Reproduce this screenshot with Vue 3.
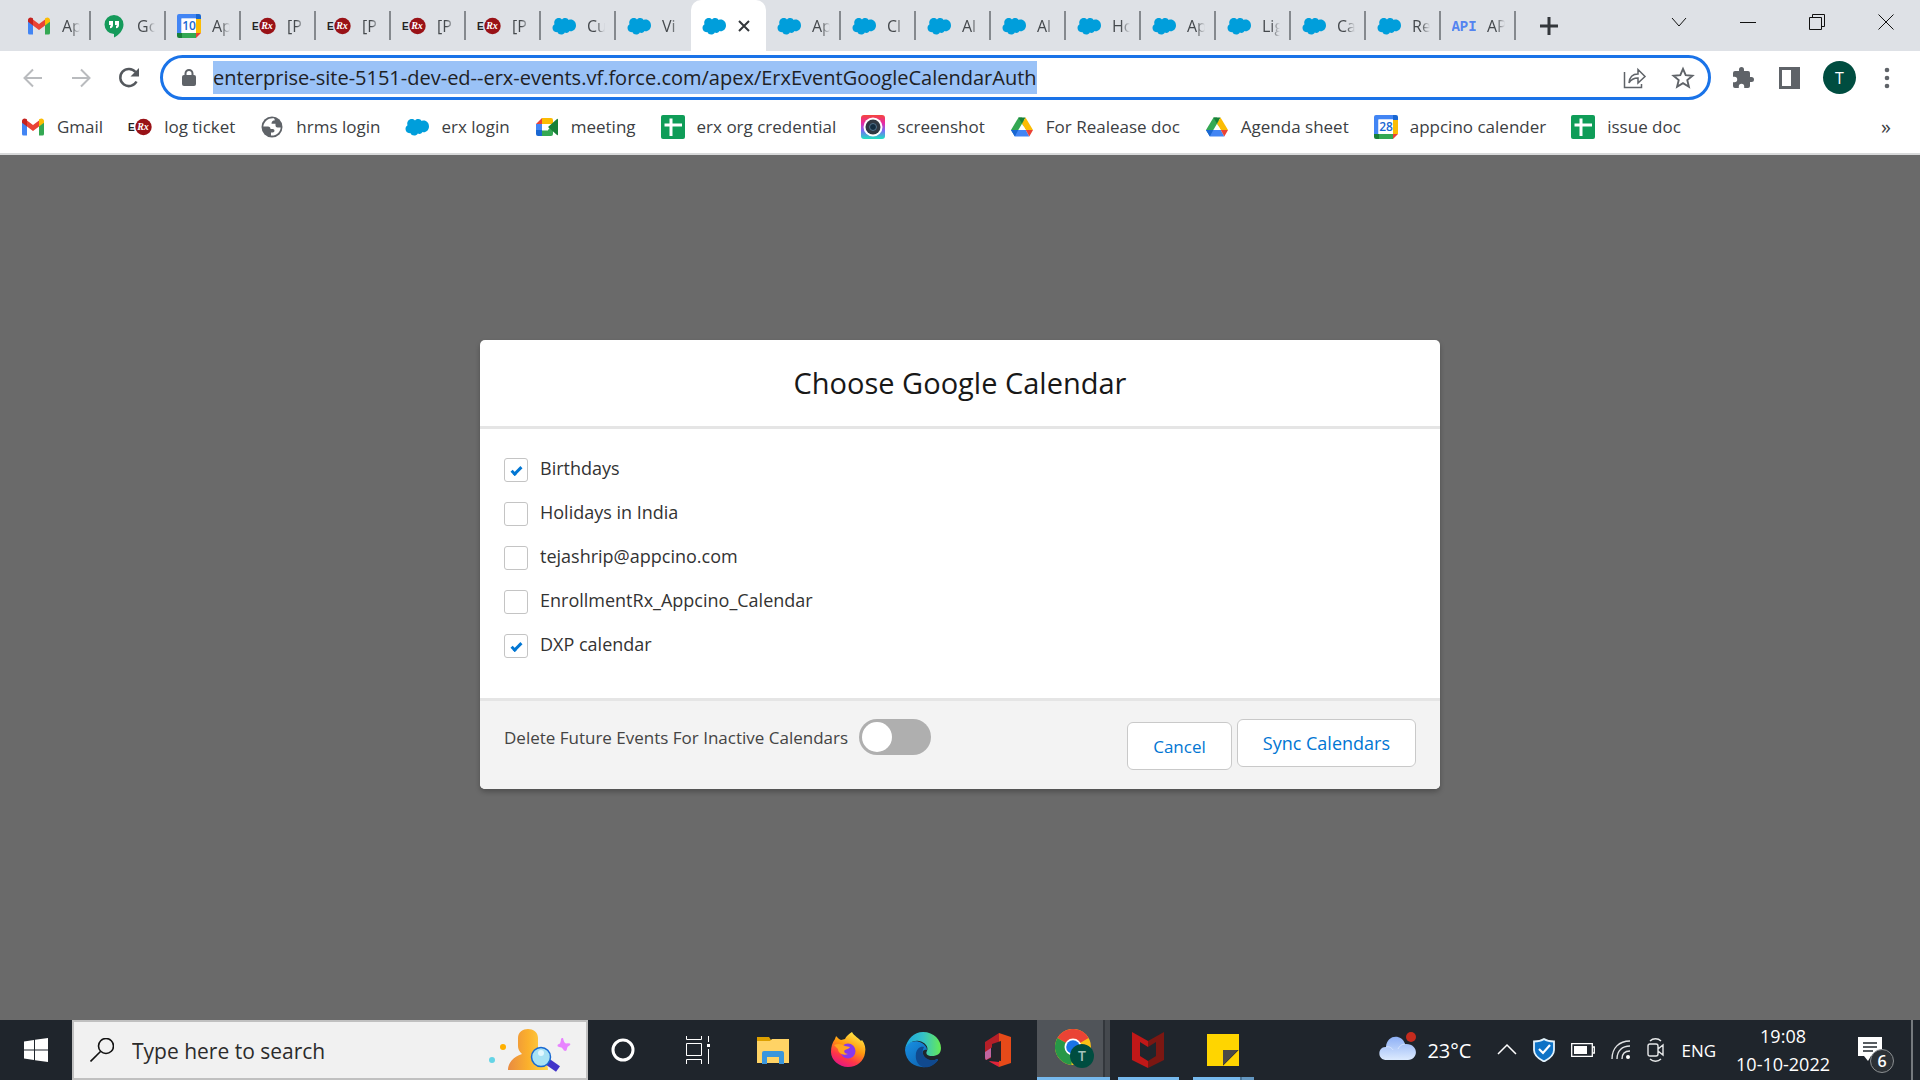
<script setup>
  import { reactive, ref } from 'vue'

  // every open tab; the title is cut off by the narrow tab
  const tabs = [
    { icon: 'gmail', title: 'Ap' },
    { icon: 'hangouts', title: 'Go' },
    { icon: 'cal', day: '10', title: 'Ap' },
    { icon: 'erx', title: '[P' },
    { icon: 'erx', title: '[P' },
    { icon: 'erx', title: '[P' },
    { icon: 'erx', title: '[P' },
    { icon: 'cloud', title: 'Cu' },
    { icon: 'cloud', title: 'Vi' },
    { icon: 'cloud', title: '', active: true },
    { icon: 'cloud', title: 'Ap' },
    { icon: 'cloud', title: 'Cl' },
    { icon: 'cloud', title: 'Al' },
    { icon: 'cloud', title: 'Al' },
    { icon: 'cloud', title: 'Ho' },
    { icon: 'cloud', title: 'Ap' },
    { icon: 'cloud', title: 'Lig' },
    { icon: 'cloud', title: 'Ca' },
    { icon: 'cloud', title: 'Re' },
    { icon: 'api', title: 'AP' },
  ]

  const bookmarks = [
    { icon: 'gmail', title: 'Gmail' },
    { icon: 'erx', title: 'log ticket' },
    { icon: 'globe', title: 'hrms login' },
    { icon: 'cloud', title: 'erx login' },
    { icon: 'meet', title: 'meeting' },
    { icon: 'sheet', title: 'erx org credential' },
    { icon: 'camera', title: 'screenshot' },
    { icon: 'drive', title: 'For Realease doc' },
    { icon: 'drive', title: 'Agenda sheet' },
    { icon: 'cal', day: '28', title: 'appcino calender' },
    { icon: 'sheet', title: 'issue doc' },
  ]

  const calendars = reactive([
    { name: 'Birthdays', checked: true },
    { name: 'Holidays in India', checked: false },
    { name: 'tejashrip@appcino.com', checked: false },
    { name: 'EnrollmentRx_Appcino_Calendar', checked: false },
    { name: 'DXP calendar', checked: true },
  ])

  const url = ref('enterprise-site-5151-dev-ed--erx-events.vf.force.com/apex/ErxEventGoogleCalendarAuth')
  const deleteFuture = ref(false)
  const search = ref('')
</script>

<template>
  <!-- shared site icons -->
  <svg class="defs" width="0" height="0" aria-hidden="true">
    <defs>
      <symbol id="i-gmail" viewBox="0 0 24 24">
        <path fill="#4285f4" d="M1 7v12q0 1.500 1.500 1.500H6V10z" />
        <path fill="#34a853" d="M18 10v10.500h3.500q1.500 0 1.500-1.500V7z" />
        <path fill="#ea4335" d="M6 5.500l6 4.500 6-4.500v6l-6 4.500-6-4.500z" />
        <path fill="#c5221f" d="M1 6c0-2.500 2.700-3.300 4.400-2L6 4.500v7L1 7.800z" />
        <path fill="#fbbc04" d="M23 6c0-2.500-2.700-3.300-4.400-2l-.6.5v7l5-3.700z" />
      </symbol>
      <symbol id="i-hangouts" viewBox="0 0 24 24">
        <path fill="#159a5b" d="M12 1a9.500 9.500 0 0 0 0 19v3.500c5-2.500 9.500-7.500 9.500-13A9.500 9.500 0 0 0 12 1z" />
        <path fill="#fff" d="M7 7h4v4c0 2-1 3-3 3.200v-2L9 11H7zM13 7h4v4c0 2-1 3-3 3.200v-2l1-1.200h-2z" />
      </symbol>
      <symbol id="i-cal" viewBox="0 0 24 24">
        <path fill="#4285f4" d="M2 0h17v4.500H4.500V19H0V2q0-2 2-2z" />
        <path fill="#1967d2" d="M19 0h3q2 0 2 2v3h-5z" />
        <path fill="#fbbc04" d="M19 5h5v14h-5z" />
        <path fill="#34a853" d="M5 19h14v5H5z" />
        <path fill="#188038" d="M0 19h5v5H2q-2 0-2-2z" />
        <path fill="#ea4335" d="M19 19h5l-5 5z" />
        <path fill="#fff" d="M4.500 4.500H19V19H4.500z" />
      </symbol>
      <symbol id="i-erx" viewBox="0 0 24 24">
        <circle cx="15.500" cy="12" r="8.200" fill="#991217" />
      </symbol>
      <symbol id="i-cloud" viewBox="0 0 24 24">
        <path fill="#009edb" d="M10 5.500c1-1.200 2.300-1.600 3.500-1.500 1.300.1 2.500.8 3.200 2C20.500 4.500 24 7.500 24 11.500c0 4-3.500 6.500-6.500 5.600-1 1.700-3 2.300-4.700 1.500-1.500 2.800-6.300 2.700-7.500-.5C2.500 18.500.5 16.500.5 14c0-1.800.8-3 2-3.800C1 5.500 6.500 2 10 5.500z" />
      </symbol>
      <symbol id="i-api" viewBox="0 0 24 24"></symbol>
      <symbol id="i-globe" viewBox="0 0 24 24">
        <circle cx="12" cy="12" r="10.500" fill="#5f6368" />
        <path fill="#fff" d="M14 3.300C9 2.500 4 6 3.300 11.500H8q2.500 0 2.500 2.500h2.300q1.700 0 1.700 1.800 0 1.700-1.700 1.700H11v3c5 .5 9.500-3.300 9.700-8h-3.200q-2 0-2-2v-1.700h-4q0-3.500 3.500-3.500z" />
      </symbol>
      <symbol id="i-meet" viewBox="0 0 24 24">
        <path fill="#ea4335" d="M7 3v6H1z" />
        <path fill="#fbbc04" d="M7 3h9q2 0 2 2v4h-5V9H7z" />
        <path fill="#4285f4" d="M1 9h6v6.500H1z" />
        <path fill="#1967d2" d="M1 15h6v6H3q-2 0-2-2z" />
        <path fill="#34a853" d="M7 15h6l5-6v10q0 2-2 2H7z" />
        <path fill="#188038" d="M13 12l9-8q1-.6 1 .8v14.400q0 1.400-1 .8z" />
        <path fill="#fff" d="M7 9h6v6.500H7z" />
      </symbol>
      <symbol id="i-sheet" viewBox="0 0 24 24">
        <rect width="24" height="24" rx="2" fill="#0f9d58" />
        <path fill="#fff" d="M8.500 3.500h3v5H21v3h-9.500V21h-3v-9.500H3.500v-3h5z" />
      </symbol>
      <symbol id="i-camera" viewBox="0 0 24 24">
        <linearGradient id="g-cam" x1="0" y1="0" x2="0" y2="1">
          <stop offset="0" stop-color="#f5463c" /><stop offset=".35" stop-color="#e628a8" />
          <stop offset=".65" stop-color="#7a6cf5" /><stop offset="1" stop-color="#1ce5c0" />
        </linearGradient>
        <rect width="24" height="24" rx="3" fill="url(#g-cam)" />
        <circle cx="12" cy="12" r="9.500" fill="#fff" />
        <circle cx="12" cy="12" r="7.500" fill="#303842" />
        <circle cx="12" cy="12" r="3.500" fill="#122c40" stroke="#53738c" />
      </symbol>
      <symbol id="i-drive" viewBox="0 0 24 24">
        <path fill="#34a853" d="M8.500 2.500H12L15.500 9 5 21 1 15z" />
        <path fill="#188038" d="M8.500 2.500h7L12 8.700z" />
        <path fill="#fbbc04" d="M15.500 2.500L23 15h-7.200L12 8.700z" />
        <path fill="#4285f4" d="M8.300 15h7.500l3.500 6.500H5L1 15z" />
        <path fill="#1967d2" d="M1 15h7.300L4.800 21.500z" />
        <path fill="#ea4335" d="M15.800 15H23l-3.700 6.500z" />
        <path fill="#fff" d="M12 8.700l3.800 6.300H8.300z" />
      </symbol>
    </defs>
  </svg>

  <div class="screen">
    <header class="browser">
      <div class="tab-strip">
        <div v-for="(tab, index) in tabs" :key="index" class="tab" :class="{ active: tab.active, before: tabs[index + 1] && tabs[index + 1].active }">
          <svg class="site-icon" viewBox="0 0 24 24">
            <use :href="`#i-${tab.icon}`" />
            <text v-if="tab.icon === 'cal'" class="cal-day" x="12" y="16">{{ tab.day }}</text>
            <text v-if="tab.icon === 'api'" class="api-text" x="12" y="17">API</text>
            <template v-if="tab.icon === 'erx'">
              <text class="erx-e" x="0" y="16">E</text>
              <text class="erx-r" x="15" y="15">Rx</text>
            </template>
          </svg>
          <span v-if="!tab.active" class="tab-title">{{ tab.title }}</span>
          <button v-else class="plain tab-close" aria-label="Close tab">
            <svg width="14" height="14" viewBox="0 0 14 14"><path d="M2 2l10 10M12 2L2 12" stroke="#33373b" stroke-width="2" /></svg>
          </button>
        </div>
        <button class="plain new-tab" aria-label="New tab">
          <svg width="20" height="20" viewBox="0 0 20 20"><path d="M10 1v18M1 10h18" stroke="#33373b" stroke-width="3" /></svg>
        </button>
        <div class="window-buttons">
          <button class="plain" aria-label="Search tabs">
            <svg width="16" height="16" viewBox="0 0 16 16"><path d="M1 4l7 8 7-8" /></svg>
          </button>
          <button class="plain" aria-label="Minimize">
            <svg width="16" height="16" viewBox="0 0 16 16"><path d="M0 8.500h16" /></svg>
          </button>
          <button class="plain" aria-label="Restore">
            <svg width="16" height="16" viewBox="0 0 16 16"><path d="M.5 3.500h12v12H.5zM3.500 3V.5h12v12H13" /></svg>
          </button>
          <button class="plain" aria-label="Close">
            <svg width="16" height="16" viewBox="0 0 16 16"><path d="M.5.5l15 15M15.500.5l-15 15" /></svg>
          </button>
        </div>
      </div>

      <div class="toolbar">
        <button class="plain nav" aria-label="Back">
          <svg width="20" height="20" viewBox="0 0 20 20"><path d="M19 10H2M10 1.500L1.500 10l8.500 8.500" stroke="#b9bbbe" stroke-width="2" /></svg>
        </button>
        <button class="plain nav" aria-label="Forward">
          <svg width="20" height="20" viewBox="0 0 20 20"><path d="M1 10h17M10 1.500l8.500 8.500-8.500 8.500" stroke="#b9bbbe" stroke-width="2" /></svg>
        </button>
        <button class="plain nav" aria-label="Reload">
          <svg width="22" height="22" viewBox="0 0 22 22">
            <path d="M18.500 14.500A8.600 8.600 0 1 1 17.500 5" stroke="#54585d" stroke-width="2.500" />
            <path d="M21 1v8.500h-8.500z" fill="#54585d" />
          </svg>
        </button>
        <div class="omnibox">
          <svg class="lock" width="14" height="18" viewBox="0 0 14 18">
            <rect y="6" width="14" height="11" rx="2" fill="#5f6368" />
            <path d="M3.500 7V4.500a3.500 3.500 0 0 1 7 0V7" stroke="#5f6368" stroke-width="2" />
          </svg>
          <div class="url-area">
            <span class="url-selection" aria-hidden="true">{{ url }}</span>
            <input v-model="url" class="url" aria-label="Address" spellcheck="false">
          </div>
          <button class="plain" aria-label="Share">
            <svg width="24" height="24" viewBox="0 0 24 24">
              <path d="M1.500 6v15.500h17V18M6 17c.5-6 4-9 9-9V3.500l7 7-7 6.500v-5c-4 0-7 1.500-9 5z" stroke="#5f6368" stroke-width="1.500" />
            </svg>
          </button>
          <button class="plain" aria-label="Bookmark">
            <svg width="24" height="24" viewBox="0 0 24 24">
              <path d="M12 2.800l2.700 6.300 6.800.6-5.200 4.400 1.600 6.700-5.900-3.600-5.900 3.600 1.600-6.700-5.200-4.400 6.800-.6z" stroke="#5f6368" stroke-width="1.900" />
            </svg>
          </button>
        </div>
        <div class="tools">
          <button class="plain" aria-label="Extensions">
            <svg width="24" height="24" viewBox="0 0 24 24">
              <path fill="#5f6368" d="M20.500 11H19V7q0-2-2-2h-4V3.500a2.500 2.500 0 0 0-5 0V5H4Q2 5 2 7v3.800h1.500a2.700 2.700 0 0 1 0 5.400H2V20q0 2 2 2h3.800v-1.500a2.700 2.700 0 0 1 5.400 0V22H17q2 0 2-2v-4h1.500a2.500 2.500 0 0 0 0-5z" />
            </svg>
          </button>
          <button class="plain" aria-label="Side panel">
            <svg width="24" height="24" viewBox="0 0 24 24">
              <path fill="#5f6368" fill-rule="evenodd" d="M2 1h21v22H2zM5 4v16h9V4z" />
            </svg>
          </button>
          <button class="plain avatar" aria-label="Profile">T</button>
          <button class="plain" aria-label="Menu">
            <svg width="6" height="24" viewBox="0 0 6 24">
              <g fill="#5f6368"><circle cx="3" cy="4" r="2.300" /><circle cx="3" cy="12" r="2.300" /><circle cx="3" cy="20" r="2.300" /></g>
            </svg>
          </button>
        </div>
      </div>

      <nav class="bookmarks">
        <a v-for="mark in bookmarks" :key="mark.title" href="#" class="bookmark">
          <svg class="site-icon" viewBox="0 0 24 24">
            <use :href="`#i-${mark.icon}`" />
            <text v-if="mark.icon === 'cal'" class="cal-day" x="12" y="16">{{ mark.day }}</text>
            <template v-if="mark.icon === 'erx'">
              <text class="erx-e" x="0" y="16">E</text>
              <text class="erx-r" x="15" y="15">Rx</text>
            </template>
          </svg>
          <span>{{ mark.title }}</span>
        </a>
        <button class="plain more" aria-label="More bookmarks">»</button>
      </nav>
    </header>

    <main class="page">
      <section class="dialog" role="dialog" aria-labelledby="dialog-title">
        <h1 id="dialog-title" class="dialog-title">Choose Google Calendar</h1>
        <div class="dialog-body">
          <label v-for="item in calendars" :key="item.name" class="calendar">
            <input v-model="item.checked" type="checkbox" class="box">
            <span>{{ item.name }}</span>
          </label>
        </div>
        <footer class="dialog-footer">
          <label class="switch-label">
            <span>Delete Future Events For Inactive Calendars</span>
            <input v-model="deleteFuture" type="checkbox" class="switch">
          </label>
          <div class="actions">
            <button class="btn cancel">Cancel</button>
            <button class="btn sync">Sync Calendars</button>
          </div>
        </footer>
      </section>
    </main>

    <footer class="taskbar">
      <button class="plain start" aria-label="Start">
        <svg width="24" height="24" viewBox="0 0 24 24"><path fill="#fff" d="M0 3.500L10 2v9.500H0zM11 1.800L24 0v11.500H11zM0 12.500h10V22L0 20.500zM11 12.500h13V24l-13-1.800z" /></svg>
      </button>
      <div class="search">
        <svg width="24" height="24" viewBox="0 0 24 24"><circle cx="16" cy="8" r="7.500" stroke="#111" stroke-width="1.600" /><path d="M10.500 13.500L.5 23.500" stroke="#111" stroke-width="1.600" /></svg>
        <input v-model="search" class="search-input" placeholder="Type here to search" aria-label="Type here to search">
        <svg width="82" height="44" viewBox="0 0 82 44">
          <defs>
            <linearGradient id="g-man"><stop offset="0" stop-color="#e98b42" /><stop offset=".5" stop-color="#fbb02c" /><stop offset="1" stop-color="#ffd84a" /></linearGradient>
          </defs>
          <path fill="url(#g-man)" d="M29 10c0-12 20-12 20 0v10c0 3-2 5-3 7 9 2 13 8 13 15H19c0-7 5-13 14-16-3-3-4-5-4-8z" />
          <circle cx="14" cy="19" r="3" fill="#ffb000" /><circle cx="3" cy="32" r="3" fill="#64d4e6" />
          <path fill="#e884ff" d="M74 10q1 5 3 5.500 2-.5 4 0 1 1-.500 2-2.500 1-2.500 3 0 2-1.500 2.500-2 0-2.500-2-1-2-4-2-2-.500-1.500-2 .5-1 2.500-1.500 1-2 1-4.500.5-1.500 2-1z" />
          <path d="M59 34l10 7" stroke="#4234c9" stroke-width="7" />
          <circle cx="52" cy="29" r="9.500" fill="#a8e2f4" stroke="#1769d2" stroke-width="1.500" />
          <circle cx="52" cy="25" r="3" fill="#e1f8ff" />
        </svg>
      </div>

      <div class="apps">
        <button class="plain app" aria-label="Cortana">
          <svg width="24" height="24" viewBox="0 0 24 24"><circle cx="12" cy="12" r="10" stroke="#fff" stroke-width="3" /></svg>
        </button>
        <button class="plain app" aria-label="Task view">
          <svg width="24" height="28" viewBox="0 0 24 28"><path d="M.5 0v3.500h15V0M.5 7.500h15v12H.5zM.5 28v-4.500h15V28M22.500 0v6M22.500 13v15" stroke="#fff" /><path d="M21 8h3v3h-3z" fill="#fff" /></svg>
        </button>
        <button class="plain app" aria-label="File Explorer">
          <svg width="36" height="36" viewBox="0 0 36 36"><path fill="#dda000" d="M2 5h12l2 3v4H2z" /><path fill="#ffd365" d="M2 9h13l2-2h17v24H2z" /><path fill="#3a96dd" d="M7 32V21q0-2 2-2h18q2 0 2 2v11h-5v-7H12v7z" /></svg>
        </button>
        <button class="plain app" aria-label="Firefox">
          <svg width="36" height="36" viewBox="0 0 36 36">
            <defs><linearGradient id="g-fox" x1=".8" y1="0" x2=".3" y2="1"><stop offset="0" stop-color="#fff44f" /><stop offset=".45" stop-color="#ff980e" /><stop offset=".75" stop-color="#ff3647" /><stop offset="1" stop-color="#e31587" /></linearGradient></defs>
            <path fill="url(#g-fox)" d="M22 0c2 4 7 6 9 9l1-1c3 4 4 8 3 13-1 8-8 14-17 14S1 28 1 20C1 15 2 11 5 7c0-1 1-2 1-3l3 3 2 1 4-1c1-3 4-5 7-7z" />
            <circle cx="18" cy="19" r="7.500" fill="#8738ec" />
            <path fill="#ffa51e" d="M4 13c4-2 8-1 11 1l5 1c-1 2-4 2-5 3-2 1 0 4 3 4-5 2-10-1-10-5z" />
          </svg>
        </button>
        <button class="plain app" aria-label="Edge">
          <svg width="36" height="36" viewBox="0 0 36 36">
            <defs>
              <linearGradient id="g-edge1"><stop offset="0" stop-color="#1ba5dd" /><stop offset=".5" stop-color="#35c1c9" /><stop offset="1" stop-color="#66eb54" /></linearGradient>
              <linearGradient id="g-edge2" x1="0" y1="0" x2="1" y2="1"><stop offset="0" stop-color="#1790e4" /><stop offset="1" stop-color="#0c59a4" /></linearGradient>
            </defs>
            <path fill="url(#g-edge2)" d="M0 18C1 10 10 7 17 11c3 2 5 4 5 7-3-1-5 1-4 4 1 6 9 8 14 5 1 0 1 1 1 1C25 40 1 37 0 18z" />
            <path fill="#10498e" d="M11 21c1-4 4-7 8-6-3 5-1 11 6 13 3 1 7-1 8 0-5 7-11 8-15 7-6-2-8-8-7-14z" />
            <path fill="url(#g-edge1)" d="M0 17C2 7 9 0 18 0c11 0 18 8 18 16 0 6-4 8-9 8-4 0-7-2-5-5 2-4-2-9-8-10C8 8 3 11 0 17z" />
          </svg>
        </button>
        <button class="plain app" aria-label="Office">
          <svg width="36" height="36" viewBox="0 0 36 36"><path fill="#b51f28" d="M5 10L19 1v10l-8 5v10l-5 2q-1-1-1-2z" /><path fill="#c165a0" d="M5 20l6-4v9l-5 3q-1-1-1-3z" /><path fill="#e64a19" d="M19 1l12 4v26l-12 4z" /><path fill="#e2243b" d="M9 29l10 1v5l-9-5z" /><path fill="#242329" d="M12 12l9-3v20l-9-1z" /></svg>
        </button>
        <button class="plain app current" aria-label="Chrome">
          <svg width="40" height="40" viewBox="0 0 40 40">
            <circle cx="18" cy="18" r="18" fill="#fbc116" />
            <path fill="#ea4335" d="M18 18L2.400 9a18 18 0 0 1 31.200 0z" />
            <path fill="#279847" d="M18 18L2.400 9a18 18 0 0 0 14 27z" />
            <circle cx="18" cy="18" r="8.500" fill="#fff" /><circle cx="18" cy="18" r="6.800" fill="#1a73e8" />
            <circle cx="27" cy="27" r="12" fill="#004d40" />
            <text x="27" y="32" text-anchor="middle" font-size="14" font-weight="600" fill="#a5c3bd">T</text>
          </svg>
        </button>
        <button class="plain app open" aria-label="McAfee">
          <svg width="32" height="36" viewBox="0 0 32 36"><path fill="#c01818" d="M0 0l16 9v6L8 10v14l8 5v7L0 28z" /><path fill="#7b1712" d="M32 0L16 9v6l8-5v14l-8 5v7l16-8z" /></svg>
        </button>
        <button class="plain app open stacked" aria-label="Sticky Notes">
          <svg width="32" height="32" viewBox="0 0 32 32"><path fill="#ffd500" d="M0 0h32v32H0z" /><path fill="#2b2c30" d="M16 32V16h16z" /><path fill="#ffd500" d="M32 16v16H16z" /><path fill="#4a4947" d="M16 16h15L16 31z" /></svg>
        </button>
      </div>

      <div class="tray">
        <div class="weather">
          <svg width="38" height="36" viewBox="0 0 38 36">
            <defs><linearGradient id="g-sky" x1="0" y1="0" x2="0" y2="1"><stop offset="0" stop-color="#8eb0f6" /><stop offset="1" stop-color="#dceafe" /></linearGradient></defs>
            <path fill="url(#g-sky)" d="M8 28C-3 28-1 14 7 15 8 2 23 2 26 12c14-1 14 16 3 16z" />
            <path d="M7 15c3-1 6 1 7 3M26 12c-4 0-6 3-7 5" stroke="#eaf2ff" opacity=".6" />
            <circle cx="32" cy="5" r="5" fill="#c52b1e" />
          </svg>
          <span>23°C</span>
        </div>
        <svg class="caret" width="20" height="20" viewBox="0 0 20 20"><path d="M1 14l9-9 9 9" stroke="#fff" stroke-width="1.500" /></svg>
        <svg width="22" height="24" viewBox="0 0 22 24"><path fill="#0d72c6" stroke="#e2f2fc" stroke-width="1.800" d="M11 1c3 2 6 2.500 10 2.500V12c0 6-5 9-10 11.500C6 21 1 18 1 12V3.500C5 3.500 8 3 11 1z" /><path d="M6 11l4 4 7-8" stroke="#fff" stroke-width="2.200" /></svg>
        <svg width="24" height="14" viewBox="0 0 24 14"><path d="M.7.7h20.600v12.600H.7zM22 4h1.300v6H22" stroke="#fff" stroke-width="1.300" /><path fill="#fff" d="M3 3h13v8H3z" /></svg>
        <svg width="20" height="20" viewBox="0 0 20 20"><path d="M1 19C1 8 8 1 19 1M6 19C6 11 11 6 19 6M11 19c0-5 3-8 8-8" stroke="#e0e2e4" stroke-width="1.400" /><circle cx="17" cy="17" r="2" fill="#fff" /></svg>
        <svg width="18" height="24" viewBox="0 0 18 24"><path d="M3 3c3-3 8-3 11 0M3 21c3 3 8 3 11 0M3 6h6q2 0 2 2v8q0 2-2 2H3q-2 0-2-2V8q0-2 2-2zM11 11l5-4v10l-5-4" stroke="#e7e9ea" stroke-width="1.400" /></svg>
        <span class="lang">ENG</span>
        <time class="clock"><span>19:08</span><span>10-10-2022</span></time>
        <button class="plain notice" aria-label="Notifications">
          <svg width="24" height="26" viewBox="0 0 24 26"><path fill="#fff" d="M0 0h24v19H13l-3 5-4-5H0z" /><path d="M5 6h14M5 10h14M5 14h10" stroke="#20272c" stroke-width="1.300" /></svg>
          <span class="badge">6</span>
        </button>
      </div>
    </footer>
  </div>
</template>

<style>
html,
body {
  margin: 0;
  overflow: hidden;
}
</style>

<style scoped>
.screen {
  display: flex;
  flex-direction: column;
  height: 100vh;
  font-family: "Open Sans", "Noto Sans", sans-serif;
  color: #202124;
}
svg {
  fill: none;
  flex: none;
  display: block;
}
.defs {
  position: absolute;
}
.plain {
  display: flex;
  align-items: center;
  justify-content: center;
  padding: 0;
  border: 0;
  background: none;
  font-family: inherit;
}

/* tabs */
.tab-strip {
  display: flex;
  height: 51px;
  padding-left: 16px;
  background: #dee1e6;
}
.tab {
  display: flex;
  align-items: center;
  gap: 11px;
  box-sizing: border-box;
  width: 75px;
  padding-left: 11px;
  background: linear-gradient(#85898e, #85898e) right center / 2px 29px no-repeat;
}
.tab.active {
  background: #fff;
  border-radius: 10px 10px 0 0;
}
.tab.before {
  background: none;
}
.site-icon {
  width: 24px;
  height: 24px;
}
.tab-title {
  width: 18px;
  overflow: hidden;
  white-space: nowrap;
  font-size: 16px;
  color: #45494d;
  -webkit-mask-image: linear-gradient(90deg, #000 50%, transparent);
  mask-image: linear-gradient(90deg, #000 50%, transparent);
}
.cal-day {
  font: 600 12px "Open Sans", sans-serif;
  text-anchor: middle;
  fill: #1967d2;
}
.api-text {
  font: bold 14px "Liberation Mono", monospace;
  text-anchor: middle;
  fill: #5484f0;
}
.erx-e {
  font: bold 10px "Liberation Sans", sans-serif;
  fill: #222;
}
.erx-r {
  font: italic bold 10px "Liberation Serif", serif;
  text-anchor: middle;
  fill: #fff;
}
.new-tab {
  width: 66px;
}
.window-buttons {
  display: flex;
  align-items: center;
  gap: 53px;
  margin: 0 26px 8px auto;
}
.window-buttons svg {
  stroke: #111;
}

/* address row */
.toolbar {
  display: flex;
  align-items: center;
  height: 53px;
  padding-left: 9px;
  background: #fff;
}
.nav {
  width: 48px;
}
.omnibox {
  display: flex;
  flex: 1;
  align-items: center;
  gap: 24px;
  box-sizing: border-box;
  height: 45px;
  margin-left: 7px;
  padding: 0 13px 0 19px;
  border: 3px solid #1a73e8;
  border-radius: 23px;
}
.url-area {
  position: relative;
  flex: 1;
  margin-left: -7px;
  font-size: 20px;
  line-height: 33px;
}
.url-selection {
  display: inline-block;
  vertical-align: top;
  background: #9ac2f7;
  color: transparent;
}
.url {
  position: absolute;
  inset: 0;
  width: 100%;
  height: 33px;
  padding: 0;
  border: 0;
  outline: 0;
  background: none;
  font: inherit;
  color: #202124;
}
.tools {
  display: flex;
  align-items: center;
  gap: 22px;
  margin: 0 30px 0 20px;
}
.tools .avatar {
  width: 33px;
  height: 33px;
  border-radius: 50%;
  background: #004d40;
  color: #fff;
  font-size: 16px;
}
.tools .avatar + .plain {
  margin-left: 6px;
}

/* bookmarks */
.bookmarks {
  display: flex;
  align-items: center;
  gap: 25px;
  height: 45px;
  padding: 0 29px 4px 21px;
  border-bottom: 2px solid #d8d9da;
  background: #fff;
}
.bookmark {
  display: flex;
  align-items: center;
  gap: 12px;
  white-space: nowrap;
  font-size: 17px;
  line-height: 24px;
  color: #3c4043;
  text-decoration: none;
}
.more {
  margin-left: auto;
  font-size: 20px;
  color: #3c4043;
}

/* page */
.page {
  display: flex;
  flex: 1;
  align-items: flex-start;
  justify-content: center;
  padding-top: 185px;
  background: #6a6a6a;
}
.dialog {
  width: 50%;
  border-radius: 5px;
  overflow: hidden;
  background: #fff;
  box-shadow: 0 3px 5px rgba(0, 0, 0, .25);
}
.dialog-title {
  margin: 0;
  padding: 21px 24px;
  border-bottom: 3px solid #e5e5e5;
  text-align: center;
  font-size: 29px;
  line-height: 44px;
  font-weight: 400;
  color: #181818;
}
.dialog-body {
  padding: 19px 24px 30px;
}
.calendar {
  display: flex;
  align-items: center;
  gap: 12px;
  height: 44px;
  font-size: 18px;
  line-height: 44px;
  color: #333;
}
.calendar span {
  margin-top: -4px;
}
.box {
  appearance: none;
  box-sizing: border-box;
  width: 24px;
  height: 24px;
  margin: 0;
  border: 1px solid #c4c4c4;
  border-radius: 3px;
  background: #fff;
  display: grid;
  place-items: center;
}
.box:checked::after {
  content: "";
  width: 8px;
  height: 3px;
  border: solid #0176d3;
  border-width: 0 0 3px 3px;
  transform: rotate(-45deg);
}
.dialog-footer {
  display: flex;
  align-items: flex-start;
  justify-content: space-between;
  padding: 18px 24px 19px;
  border-top: 3px solid #e5e5e5;
  background: #f3f3f3;
}
.switch-label {
  display: flex;
  align-items: center;
  gap: 11px;
  font-size: 17px;
  line-height: 38px;
  color: #444;
}
.switch {
  appearance: none;
  box-sizing: border-box;
  width: 72px;
  height: 36px;
  margin: 0 0 2px;
  padding: 3px;
  border-radius: 18px;
  background: #afafaf;
}
.switch::after {
  content: "";
  display: block;
  width: 30px;
  height: 30px;
  border-radius: 50%;
  background: #fff;
}
.switch:checked {
  background: #0176d3;
}
.switch:checked::after {
  margin-left: auto;
}
.actions {
  display: flex;
  align-items: flex-start;
  gap: 5px;
}
.btn {
  height: 48px;
  padding: 0 25px;
  border: 1px solid #c9c9c9;
  border-radius: 6px;
  background: #fff;
  font-family: inherit;
  color: #0176d3;
}
.cancel {
  margin-top: 3px;
  font-size: 17px;
}
.sync {
  font-size: 18px;
}

/* taskbar */
.taskbar {
  display: flex;
  height: 60px;
  background: #1f252c;
}
.start {
  width: 72px;
}
.search {
  display: flex;
  align-items: center;
  gap: 18px;
  box-sizing: border-box;
  width: 516px;
  padding: 0 15px 0 16px;
  border: 2px solid #c0c0c0;
  background: #f1f1f1;
}
.search-input {
  flex: 1;
  min-width: 0;
  padding: 2px 0 0;
  border: 0;
  outline: 0;
  background: none;
  font: inherit;
  font-size: 21px;
}
.search-input::placeholder {
  color: #2b2b2b;
}
.apps {
  display: flex;
  gap: 9px;
  margin-left: 2px;
}
.app {
  box-sizing: border-box;
  width: 66px;
}
.open {
  background: linear-gradient(#76b9ed, #76b9ed) center bottom / 61px 3px no-repeat;
}
.open.stacked {
  background-image: linear-gradient(90deg, #76b9ed 47px, #4b7698 47px 49px, #6397c1 49px);
}
/* two windows open: the second one peeks out on the right */
.current {
  width: 73px;
  margin: 0 -4px 0 -3px;
  padding-left: 3px;
  border-bottom: 3px solid #76b9ed;
  background: linear-gradient(90deg, #505459 66px, #33373c 66px 68px, #45494e 68px);
}
.tray {
  display: flex;
  align-items: center;
  gap: 16px;
  margin-left: auto;
  margin-right: 7px;
  padding-right: 17px;
  border-right: 2px solid #757a7e;
  font-size: 17px;
  color: #fff;
}
.weather {
  display: flex;
  align-items: center;
  gap: 10px;
  margin-right: 10px;
  font-size: 20px;
}
.clock {
  display: flex;
  flex-direction: column;
  align-items: center;
  margin: 0 12px 0 4px;
  font-size: 18px;
  line-height: 28px;
}
.notice {
  position: relative;
  width: 36px;
  justify-content: flex-start;
}
.badge {
  position: absolute;
  left: 12px;
  top: 12px;
  width: 22px;
  height: 22px;
  border: 1px solid #8b8f92;
  border-radius: 50%;
  background: #2c3136;
  font-size: 16px;
  font-weight: 600;
  line-height: 22px;
  text-align: center;
  color: #fff;
}
</style>
